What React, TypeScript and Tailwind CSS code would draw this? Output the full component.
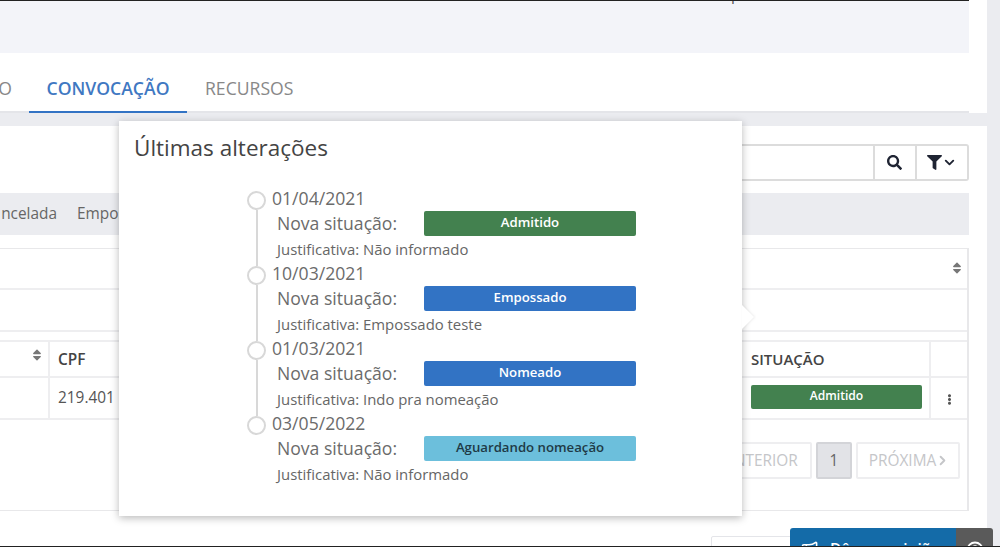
import { FaSearch, FaFilter, FaSort, FaEllipsisV } from "react-icons/fa";
import { FiChevronDown } from "react-icons/fi";
import { Megaphone, CircleHelp } from "lucide-react";

const font = { fontFamily: '"Open Sans", sans-serif' };

function Badge({ label, color, dark }: { label: string; color: string; dark?: boolean }) {
  return (
    <div
      className={`w-[212px] h-[25px] rounded-[2px] flex items-center justify-center text-[13.2px] font-semibold leading-none pb-[2px] ${dark ? "text-[#1f3a46]" : "text-white"}`}
      style={{ backgroundColor: color }}
    >
      {label}
    </div>
  );
}

const items = [
  { date: "01/04/2021", label: "Admitido", color: "#43814f", just: "Não informado" },
  { date: "10/03/2021", label: "Empossado", color: "#3273c4", just: "Empossado teste" },
  { date: "01/03/2021", label: "Nomeado", color: "#3273c4", just: "Indo pra nomeação" },
  { date: "03/05/2022", label: "Aguardando nomeação", color: "#6cbfdc", just: "Não informado", dark: true },
];

export default function App() {
  return (
    <div className="relative w-[1000px] h-[547px] overflow-hidden bg-[#ebecf0] text-[#555]" style={font}>
      <div className="w-[987px] h-[547px] bg-white flex flex-col">
        {/* top panel */}
        <div className="h-[53px] w-[969px] bg-[#f3f4f9] border-t border-[#222] overflow-hidden shrink-0">
          <div className="ml-[731px] -mt-[15px] text-[15.4px] leading-[18px] text-[#555]">p</div>
        </div>
        {/* tabs */}
        <div className="h-[60px] w-[969px] shrink-0 flex items-stretch border-b-2 border-[#e4e5e9] text-[17.6px] font-normal">
          <div className="w-[29px] overflow-hidden flex items-center justify-end pr-[17px] text-[#888] pt-[13px]">O</div>
          <div className="w-[158px] -mb-[2px] border-b-2 border-[#3273c4] flex items-center justify-center font-semibold text-[#3f78c2] pt-[13px]">CONVOCAÇÃO</div>
          <div className="pl-[18px] flex items-center text-[#888] pt-[13px]">RECURSOS</div>
        </div>
        <div className="h-[13px] shrink-0 bg-[#ebecf0]" />
        {/* card */}
        <div className="flex-1 pr-[18px] flex flex-col pt-[18px]">
          <div className="h-[37px] shrink-0 flex justify-end">
            <div className="w-[640px] flex border-2 border-l-0 border-[#dcdcdc] rounded-r-[3px]">
              <div className="flex-1" />
              <div className="w-[42px] border-l-2 border-[#dcdcdc] flex items-center justify-center pr-[2px] text-[#1f2433]">
                <FaSearch className="w-[15px] h-[15px]" />
              </div>
              <div className="w-[52px] border-l-2 border-[#dcdcdc] flex items-center justify-center text-[#1f2433]">
                <FaFilter className="w-[15px] h-[15px]" />
                <FiChevronDown className="w-[15px] h-[15px]" strokeWidth={3} />
              </div>
            </div>
          </div>
          <div className="h-[42px] mt-[12px] shrink-0 bg-[#ebecf0] overflow-hidden flex items-center text-[15.4px] text-[#666]">
            <span className="w-[57px] overflow-hidden whitespace-nowrap flex justify-end shrink-0">ncelada</span>
            <span className="ml-[20px]">Empossado</span>
          </div>
          <div className="mt-[13px] h-[263px] shrink-0 border border-l-0 border-[#e8e8ea] border-r-2 flex flex-col">
            <div className="h-[41px] shrink-0 flex items-center justify-end pr-[3px] pb-[2px] border-b-2 border-[#eeeef0] text-[#777]">
              <FaSort className="w-[14px] h-[14px]" />
            </div>
            <div className="h-[42px] shrink-0 border-b-2 border-[#eeeef0]" />
            <div className="h-[8px] shrink-0" />
            <div className="h-[80px] shrink-0 border-t-2 border-[#eeeef0] grid grid-cols-[50px_1fr_181px_36px] grid-rows-[36px_42px]">
              <div className="border-r-2 border-b-2 border-[#eeeef0] flex justify-end items-start pt-[6px] pr-[4px] text-[#777]">
                <FaSort className="w-[14px] h-[14px]" />
              </div>
              <div className="border-b-2 border-[#eeeef0] flex items-center pl-[8px] pt-[1px] text-[15.4px] font-semibold text-[#444]">CPF</div>
              <div className="border-b-2 border-r-2 border-[#eeeef0] flex items-center pt-[1px] text-[15px] font-semibold text-[#444] pl-[1px]">SITUAÇÃO</div>
              <div className="border-b-2 border-[#eeeef0]" />
              <div className="border-r-2 border-b-2 border-[#eeeef0]" />
              <div className="border-b-2 border-[#eeeef0] flex items-center pl-[8px] text-[15.4px] text-[#555]">219.401</div>
              <div className="border-b-2 border-r-2 border-[#eeeef0] pt-[7px] pl-[1px]">
                <div className="w-[171px] h-[24px] bg-[#43814f] rounded-[2px] flex items-center justify-center text-white text-[12.1px] font-semibold pb-[1px]">Admitido</div>
              </div>
              <div className="border-b-2 border-[#eeeef0] flex items-center justify-center pt-[2px] text-[#555]">
                <FaEllipsisV className="w-[11px] h-[11px]" />
              </div>
            </div>
            <div className="flex justify-end mt-[22px] pr-[7px] gap-[4px] text-[15.4px] font-medium text-[#c5c6c9]">
              <div className="w-[110px] h-[37px] border-2 border-[#eeeef0] rounded-[2px] flex items-center justify-center pl-[8px]">ANTERIOR</div>
              <div className="w-[36px] h-[37px] border-2 border-[#d3d4d8] bg-[#e2e3e7] rounded-[2px] flex items-center justify-center text-[#666] font-normal">1</div>
              <div className="w-[104px] h-[37px] border-2 border-[#eeeef0] rounded-[2px] flex items-center justify-center whitespace-nowrap pl-[3px]">PRÓXIMA<FiChevronDown className="w-[15px] h-[15px] -rotate-90 -ml-[1px]" strokeWidth={3} /></div>
            </div>
          </div>
        </div>
      </div>

      {/* popover */}
      <div className="absolute left-[119px] top-[121px] w-[623px] h-[395px] bg-white shadow-[0_2px_8px_rgba(0,0,0,0.28)]">
        <div className="absolute left-[623px] top-[184px] w-0 h-0 border-y-[12px] border-y-transparent border-l-[12px] border-l-white drop-shadow-[1px_0_1px_rgba(0,0,0,0.08)]" />
        <div className="pl-[15px] pt-[12px] text-[22.5px] leading-[30px] text-[#444]">Últimas alterações</div>
        <div className="pl-[128px] pt-[25px]">
          {items.map((it, i) => (
            <div key={it.date} className="flex h-[75px]">
              <div className="w-[19px] shrink-0 flex flex-col items-center pt-[3px]">
                <div className="w-[19px] h-[19px] shrink-0 rounded-full border-2 border-[#d8d8d8] bg-white" />
                {i < items.length - 1 && <div className="w-[2px] flex-1 bg-[#d8d8d8] -mb-[3px]" />}
              </div>
              <div className="pl-[6px]">
                <div className="text-[17.6px] leading-[22px] -mt-[1px] text-[#6b6b6b]">{it.date}</div>
                <div className="flex items-center pl-[5px] h-[25px] mt-[2px]">
                  <div className="w-[147px] text-[17.6px] text-[#6b6b6b]">Nova situação:</div>
                  <Badge label={it.label} color={it.color} dark={it.dark} />
                </div>
                <div className="pl-[5px] text-[14.9px] leading-[18px] mt-[4px] text-[#666]">Justificativa: {it.just}</div>
              </div>
            </div>
          ))}
        </div>
      </div>

      {/* bottom controls */}
      <div className="absolute left-[711px] top-[536px] w-[90px] h-[20px] bg-white border border-[#e4e5e9] rounded-[2px]" />
      <div className="absolute left-[790px] top-[528px] w-[203px] h-[30px] flex rounded-t-[3px] overflow-hidden">
        <div className="w-[166px] bg-[#146ba8] text-white text-[15.4px] font-semibold pl-[40px] pt-[10px] whitespace-nowrap relative">
          <Megaphone className="absolute left-[10px] top-[12px] w-[19px] h-[19px]" />
          Dê sua opinião
        </div>
        <div className="w-[37px] bg-[#5a5a5a] flex justify-center pt-[13px] text-white">
          <CircleHelp className="w-[18px] h-[18px]" strokeWidth={2.5} />
        </div>
      </div>
      <div className="absolute left-0 bottom-0 w-[1000px] h-[1px] bg-[#222]" />
    </div>
  );
}
